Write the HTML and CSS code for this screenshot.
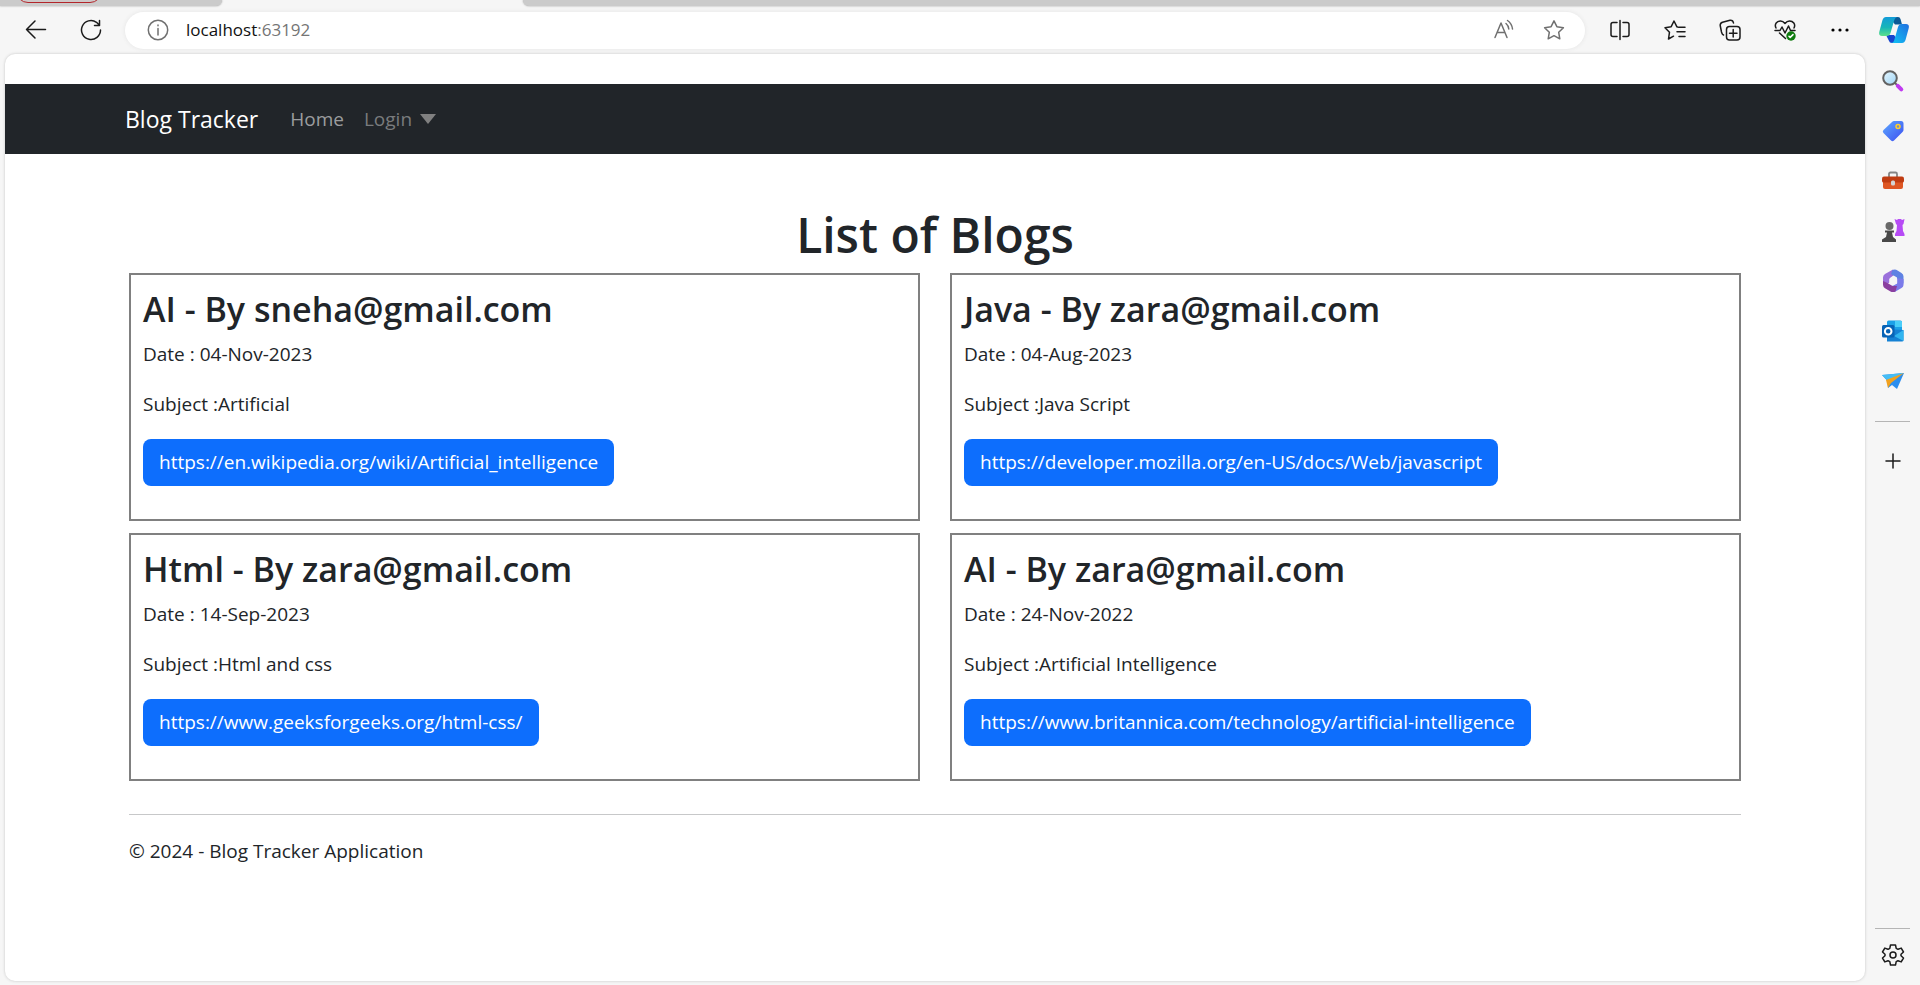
FILE: index.html
```html
<!DOCTYPE html>
<html lang="en">
<head>
<meta charset="utf-8">
<title>Blog Tracker</title>
<link rel="stylesheet" href="styles.css">
</head>
<body>
<div class="tabs"><div class="tab tab-left"><span class="profile"></span></div><div class="tab-active"></div><div class="tab tab-right"></div></div>
<header class="toolbar">
  <button class="tool" aria-label="Back"><svg width="22" height="22" viewBox="0 0 22 22" class="line"><path d="M20.500 10.500H1.500M10 2L1.500 10.500l8.500 8.500"/></svg></button>
  <button class="tool" aria-label="Refresh"><svg width="22" height="22" viewBox="0 0 22 22" class="line"><path d="M20.500 11a9.500 9.500 0 1 1-4-7.700l3 3M19.500 1.500v5H14.500"/></svg></button>
  <div class="address">
    <svg width="22" height="22" viewBox="0 0 22 22" class="line grey"><circle cx="11" cy="11" r="9.700"/><path d="M11 9.500v6.500M11 6v.8"/></svg>
    <div class="url">localhost<span class="port">:63192</span></div>
    <button class="mini" aria-label="Read aloud"><svg width="22" height="22" viewBox="0 0 22 22" class="line grey"><path d="M2 18.500L8 4l6 14.500M4.200 13.500h7.600M13 4.500a8 8 0 0 1 2.800 5.500M14.500 1.500a12 12 0 0 1 5 8.500"/></svg></button>
    <button class="mini" aria-label="Favorite"><svg width="22" height="22" viewBox="0 0 22 22" class="line grey"><path d="M11 1.800l2.900 5.900 6.500 1-4.700 4.600 1.100 6.500L11 16.700l-5.800 3.100 1.100-6.500L1.600 8.700l6.500-1z"/></svg></button>
  </div>
  <button class="tool" aria-label="Split screen"><svg width="22" height="22" viewBox="0 0 22 22" class="line"><path d="M11 1.500v19M8 3.500H4Q2 3.500 2 5.500v10q0 2 2 2h4M14 3.500h4q2 0 2 2v10q0 2-2 2h-4"/></svg></button>
  <button class="tool" aria-label="Favorites"><svg width="22" height="22" viewBox="0 0 22 22" class="line"><path d="M13.500 8l-.7-.3L10 2 7.200 7.700 1 8.700l4.500 4.500L4.500 20l5-2.800M14.500 8.200H21M13 12.800h8M15 17.500h6"/></svg></button>
  <button class="tool" aria-label="Collections"><svg width="22" height="22" viewBox="0 0 22 22" class="line"><rect x="7.500" y="7.500" width="13.500" height="13.500" rx="3"/><path d="M14.200 10.500v7.500M10.500 14.200H18M4.500 16C3 15.500 3 14.500 2.500 13L1.200 6.500Q1 4 3.500 3.200L11 1.300Q14 1 14.500 4"/></svg></button>
  <button class="tool" aria-label="Browser essentials"><svg width="22" height="22" viewBox="0 0 22 22" class="line"><path d="M2 9C0 5 3 2 6.500 2 9 2 11 4.500 11 4.500S13 2 15.500 2C19 2 22 5 20 9M1 11.500h5L8 8l3 6 3.500-7 2 4.500h4.500M5.500 14l6 5.500"/><circle cx="17" cy="17" r="4.700" fill="#107c10" stroke="none"/><path d="M15 17.200l1.200 1.200 2.800-2.800" stroke="#fff"/></svg></button>
  <button class="tool" aria-label="Settings and more"><svg width="22" height="22" viewBox="0 0 22 22"><circle cx="4" cy="11" r="1.600"/><circle cx="11" cy="11" r="1.600"/><circle cx="18" cy="11" r="1.600"/></svg></button>
  <button class="tool copilot" aria-label="Copilot"><svg width="30" height="28" viewBox="0 0 30 28">
    <defs>
      <linearGradient id="ca" x1="0" y1="0" x2="0" y2="1"><stop offset="0" stop-color="#129bd8"/><stop offset=".55" stop-color="#16b6b8"/><stop offset="1" stop-color="#5ee08a"/></linearGradient>
      <linearGradient id="cb" x1="0" y1="1" x2="1" y2="0"><stop offset="0" stop-color="#10c5f5"/><stop offset="1" stop-color="#1f6fe0"/></linearGradient>
    </defs>
    <path d="M13 1h6q2 0 2.500 2L23 8.500h-7l-4-5z" fill="#0b5a96"/>
    <path d="M7 19h8l3 4-2 4h-3q-2.500 0-3.200-2.500z" fill="#1745cf"/>
    <path d="M7 1h12q-3 0-4 4l-3.500 12q-.8 3-4 3H3q-4 0-2.500-5L3.500 4Q4.500 1 7 1z" fill="url(#ca)"/>
    <path d="M23 27H12q2.500 0 3.300-3L19 11q.8-3 4-3h4q4 0 2.500 5L26.500 24q-1 3-3.500 3z" fill="url(#cb)"/>
  </svg></button>
</header>
<div class="shell">
  <div class="page">
    <nav class="navbar"><div class="nav-inner">
      <a class="brand" href="#">Blog Tracker</a>
      <a class="link" href="#">Home</a>
      <button class="login">Login <svg width="16" height="10" viewBox="0 0 16 10"><path d="M0 0h16L8 10z"/></svg></button>
    </div></nav>
    <main class="content">
      <h1>List of Blogs</h1>
      <div class="blogs">
        <article class="card"><h2>AI - By sneha@gmail.com</h2><p>Date : 04-Nov-2023</p><p>Subject :Artificial</p><a class="btn" href="#">https://en.wikipedia.org/wiki/Artificial_intelligence</a></article>
        <article class="card"><h2>Java - By zara@gmail.com</h2><p>Date : 04-Aug-2023</p><p>Subject :Java Script</p><a class="btn" href="#">https://developer.mozilla.org/en-US/docs/Web/javascript</a></article>
        <article class="card"><h2>Html - By zara@gmail.com</h2><p>Date : 14-Sep-2023</p><p>Subject :Html and css</p><a class="btn" href="#">https://www.geeksforgeeks.org/html-css/</a></article>
        <article class="card"><h2>AI - By zara@gmail.com</h2><p>Date : 24-Nov-2022</p><p>Subject :Artificial Intelligence</p><a class="btn" href="#">https://www.britannica.com/technology/artificial-intelligence</a></article>
      </div>
      <footer class="footer">© 2024 - Blog Tracker Application</footer>
    </main>
  </div>
  <aside class="sidebar">
    <button class="side" aria-label="Search"><svg width="24" height="24" viewBox="0 0 24 24"><defs><linearGradient id="lens" x1="0" y1="0" x2="1" y2="1"><stop offset="0" stop-color="#e6f7ff"/><stop offset="1" stop-color="#9ed4f5"/></linearGradient></defs><path d="M13.500 13.500l3 3" stroke="#666" stroke-width="2"/><path d="M16.800 16.800l3.500 3.500" stroke="#c03bf0" stroke-width="4" stroke-linecap="round"/><circle cx="9" cy="9" r="6.800" fill="url(#lens)" stroke="#626262" stroke-width="2"/></svg></button>
    <button class="side" aria-label="Shopping"><svg width="24" height="24" viewBox="0 0 24 24"><defs><linearGradient id="tag" x1="0" y1="0" x2="1" y2="1"><stop offset="0" stop-color="#5eaaff"/><stop offset="1" stop-color="#3b4df0"/></linearGradient></defs><path d="M13 2h7q2.500 0 2.500 2.500V11q0 1-1 2l-8.500 8.500q-1.500 1.500-3 0L2.500 14q-1.500-1.500 0-3L11 3q1-1 2-1z" fill="url(#tag)"/><circle cx="17" cy="7.500" r="2" fill="#7587c0" stroke="#ffd028" stroke-width="1.500"/></svg></button>
    <button class="side" aria-label="Tools"><svg width="24" height="24" viewBox="0 0 24 24"><path d="M8 8V5q0-1.500 1.500-1.500h5Q16 3.500 16 5v3" fill="none" stroke="#858585" stroke-width="1.800"/><path d="M2 12h20v6q0 2-2 2H4q-2 0-2-2z" fill="#de5623"/><path d="M3 7.500h18q2 0 2 2V12q0 1.500-2 1.500H3q-2 0-2-1.500V9.500q0-2 2-2z" fill="#bf3c12"/><rect x="10" y="11.500" width="4" height="5" rx="1.500" fill="#d4d4d4"/></svg></button>
    <button class="side" aria-label="Games"><svg width="24" height="24" viewBox="0 0 24 24"><path d="M13.500 0l2.500 1 1-1h3l1 1 2.500-1-1 5-1 1 .5 6 1.500 3v2H14v-2l1.500-3L16 6l-1-1z" fill="#b64bf5"/><circle cx="8.500" cy="7" r="4" fill="#686868"/><path d="M4 11.500h9v2h-2l1 4.500 3 2.500V23H1v-2.500L5 18l1-4.500H4z" fill="#484848"/></svg></button>
    <button class="side" aria-label="Microsoft 365"><svg width="24" height="24" viewBox="0 0 24 24"><path d="M12 .5L4 5Q2 6.200 2 8.500v8l7-3V9l6-4.500z" fill="#9a70db"/><path d="M11.500 1q3-1 5 .5l4 2.500q2 1.200 2 3.500v7L16 12V8.500L10 5z" fill="#5f82e3"/><path d="M22.500 10v6q0 2-2 3l-6 3.500q-2.500 1-5-.5L8 18.500l8-4V9z" fill="#7b7bea"/><path d="M2 12v3.500Q2 18 4 19.200L9.500 22.500q2.500 1 5 0L16 17h-4.500L6.500 14z" fill="#8a3f9f"/><path d="M12.200 7.500l4 2.300v4.500l-4 2.300-4-2.300V9.800z" fill="#f6f6f6"/></svg></button>
    <button class="side" aria-label="Outlook"><svg width="24" height="24" viewBox="0 0 24 24"><rect x="6" y="1.500" width="15" height="18" rx="1.500" fill="#1ba0e8"/><path d="M14 2h6q1 0 1 1v5h-7z" fill="#49cdf8"/><path d="M6 10l16.500 1v10q0 1.500-1.500 1.500H6z" fill="#1581d4"/><path d="M22.500 11L13 17l9.500 5z" fill="#31b5f0"/><rect x="1" y="6" width="12.500" height="12.500" rx="1.500" fill="#0763b6"/><circle cx="7.200" cy="12.200" r="3.300" fill="none" stroke="#fff" stroke-width="2"/></svg></button>
    <button class="side" aria-label="Drop"><svg width="24" height="24" viewBox="0 0 24 24"><path d="M1 6l22-2-7 16-5-4-4 3-.5-7z" fill="#2b8eef"/><path d="M1 6l22-2L6.500 12z" fill="#45bdf5"/><path d="M23 4L5 11l2 8 3-5z" fill="#f2a11d"/></svg></button>
    <hr class="rule">
    <button class="side" aria-label="Add"><svg width="24" height="24" viewBox="0 0 24 24" class="line"><path d="M12 5v14M5 12h14"/></svg></button>
    <div class="bottom"><hr class="rule"><button class="side gear" aria-label="Settings"><svg width="24" height="24" viewBox="0 0 24 24" class="line"><circle cx="12" cy="12" r="3"/><path d="M9.500 2h5l.7 3.300 1.800 1 3.200-1.200L22.500 9 20 11.200v1.600l2.500 2.200-2.300 3.900-3.200-1.200-1.800 1-.7 3.300h-5l-.7-3.300-1.800-1-3.200 1.200L1.500 15 4 12.800v-1.600L1.500 9l2.300-3.900L7 6.300l1.800-1z"/></svg></button></div>
  </aside>
</div>
</body>
</html>
```
FILE: styles.css
```css
* { box-sizing: border-box; }
body {
  margin: 0;
  min-height: 100vh;
  display: flex;
  flex-direction: column;
  background: #f6f6f6;
  color: #212529;
  font-family: "Open Sans", "Noto Sans", sans-serif;
  font-size: 19px;
  line-height: 30px;
}
button { border: 0; padding: 0; background: none; font: inherit; color: inherit; }
a { color: inherit; text-decoration: none; }
svg { display: block; flex: none; }
.line { fill: none; stroke: #1b1b1b; stroke-width: 1.5; stroke-linecap: round; stroke-linejoin: round; }
.grey { stroke: #707070; }

.tabs { display: flex; height: 6px; }
.tab { background: #cbcbcb; box-shadow: 0 0 2px #999; overflow: hidden; }
.tab-left { width: 222px; border-bottom-right-radius: 6px; }
.tab-active { width: 301px; }
.tab-right { flex: 1; border-bottom-left-radius: 6px; }
.profile { display: block; width: 86px; height: 24px; margin: -21px 0 0 16px; border: 1px solid #b3262b; border-radius: 12px; background: #cfc9c9; }

.toolbar { display: flex; align-items: center; height: 48px; padding-left: 8px; }
.tool { width: 55px; height: 40px; display: grid; place-items: center; }
.copilot { width: 53px; }
.address {
  flex: 1;
  height: 37px;
  margin: 0 7px;
  padding: 0 6px 0 22px;
  display: flex;
  align-items: center;
  border-radius: 19px;
  background: #fff;
  box-shadow: 0 0 4px #e4e4e4;
}
.url { flex: 1; margin-left: 17px; font-size: 17px; color: #111; }
.port { color: #757575; }
.mini { width: 50px; height: 36px; display: grid; place-items: center; }

.shell { flex: 1; display: flex; padding: 0 0 4px 5px; }
.page {
  flex: 1;
  padding-top: 30px;
  border-radius: 10px;
  background: #fff;
  box-shadow: 0 0 3px #c4c4c4;
}
.navbar { background: #212529; padding: 0 24px; }
.nav-inner { max-width: 1620px; height: 70px; margin: 0 auto; display: flex; align-items: center; }
.brand { margin-right: 32px; font-size: 23px; color: #fff; }
.link { margin-right: 20px; color: #9b9d9e; }
.login { display: flex; align-items: center; gap: 8px; color: #797b7d; }
.login svg { fill: #808080; }

.content { max-width: 1612px; margin: 0 auto; padding-top: 51px; }
h1 { margin: 0 0 8px; font-size: 48px; line-height: 60px; font-weight: 600; text-align: center; }
.blogs { display: grid; grid-template-columns: 1fr 1fr; gap: 12px 30px; }
.card { padding: 13px 13px 33px 12px; border: 2px solid #808080; }
h2 { margin: 0 0 9px; font-size: 34px; line-height: 42px; font-weight: 600; }
p { margin: 0 0 20px; }
.btn { display: block; width: fit-content; padding: 8px 16px; border-radius: 8px; background: #0d6efd; color: #fff; line-height: 31px; }
.footer { margin-top: 33px; padding-top: 21px; border-top: 1px solid #c7c8c9; }

.sidebar { width: 55px; padding-top: 2px; display: flex; flex-direction: column; align-items: center; }
.side { width: 50px; height: 50px; display: grid; place-items: center; }
.rule { width: 35px; margin: 0; border: 0; border-top: 1px solid #b5b5b5; }
.sidebar > .rule { margin: 15px 0 14px; }
.bottom { margin-top: auto; }
.bottom .rule { margin: 0 auto; }
.gear { height: 52px; }
```
